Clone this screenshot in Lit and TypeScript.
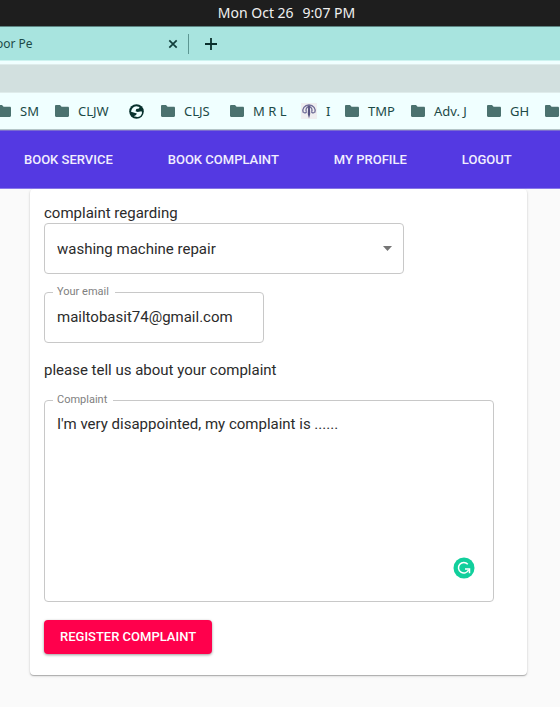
import { LitElement, html, svg, css } from "lit";
import { customElement, state } from "lit/decorators.js";

const folderIcon = html`<svg class="icon" viewBox="0 0 14 12" width="14" height="12" aria-hidden="true">
  <path fill="#4b726f" d="M1.2 0H5l1.6 1.7h6.2c.7 0 1.2.5 1.2 1.2v7.9c0 .7-.5 1.2-1.2 1.2H1.2C.5 12 0 11.500 0 10.800V1.2C0 .5.5 0 1.2 0z"/>
</svg>`;

const globeIcon = html`<svg class="icon" viewBox="0 0 16 16" width="15" height="15" aria-hidden="true">
  <circle cx="8" cy="8" r="7.8" fill="#08312e"/>
  <path fill="#f0ffff" d="M2.200 8.200C2.400 5 4.600 2.600 7.800 2.300l3.400.8-.6 1.700-2.800.6-.8 2.200 2.200.9 4.200-.9.5 1.900c-.5 2.500-2.500 4.300-5 4.400l-3.800-.9 2.400-1.200.9-1.600z"/>
</svg>`;

const emblemIcon = html`<svg class="icon" viewBox="0 0 16 16" width="16" height="16" aria-hidden="true">
  <path fill="#efeef0" d="M0 0h16v16H0z"/>
  <g fill="none" stroke="#6d6a96" stroke-width="1.300">
    <path d="M2.200 9.500C.8 6 3.600 2 8 1.800c4.400.2 7.200 4.200 5.800 7.700"/>
    <path d="M2.400 9.300c1.500 1.200 2.600.6 3.200-.8M13.600 9.300c-1.500 1.200-2.600.6-3.200-.8"/>
    <path d="M5.400 8.500C4.200 6.500 5.600 4 8 3.500c2.400.5 3.800 3 2.600 5"/>
  </g>
  <path fill="#55517f" d="M7.200 2.500h1.600l.4 8.500L8 15.500 6.800 11z"/>
</svg>`;

const grammarIcon = svg`
  <circle cx="11" cy="11" r="10.500" fill="#11cf9c"/>
  <path d="M14.800 7.300A5.300 5.300 0 1 0 15.600 13" fill="none" stroke="#fff" stroke-width="1.500"/>
  <path d="M12 11.900h4.500v4.400" fill="none" stroke="#fff" stroke-width="1.500"/>`;

const bookmarks = [
  { icon: folderIcon, label: "SM" },
  { icon: folderIcon, label: "CLJW" },
  { icon: globeIcon, label: "" },
  { icon: folderIcon, label: "CLJS" },
  { icon: folderIcon, label: "M R L" },
  { icon: emblemIcon, label: "I" },
  { icon: folderIcon, label: "TMP" },
  { icon: folderIcon, label: "Adv. J" },
  { icon: folderIcon, label: "GH" },
  { icon: folderIcon, label: "" },
];

@customElement("browser-chrome")
class BrowserChrome extends LitElement {
  static styles = css`
    :host {
      display: block;
      font-family: "Noto Sans", sans-serif;
      color: #1c4a47;
    }
    .clock {
      display: flex;
      justify-content: center;
      gap: 9px;
      height: 26px;
      padding-left: 13px;
      line-height: 25px;
      font-size: 14px;
      color: #f0f0f0;
      background: #1e1e1e;
      border-bottom: 1px solid #5d8582;
    }
    .tabs {
      display: flex;
      align-items: center;
      height: 33px;
      background: #a8e4df;
      border-bottom: 1px solid #cdf3f0;
      overflow: hidden;
    }
    .tab {
      display: flex;
      align-items: center;
      justify-content: space-between;
      box-sizing: border-box;
      width: 189px;
      height: 20px;
      padding-right: 10px;
      border-right: 1px solid #5c9692;
      font-size: 12px;
    }
    .title {
      margin-left: -4px;
    }
    button {
      display: flex;
      padding: 0;
      border: 0;
      background: none;
    }
    .new {
      margin-left: 16px;
    }
    .address {
      height: 27px;
      margin-top: 3px;
      background: #d2e0df;
      border: 1px solid #dfeceb;
      border-width: 1px 0;
    }
    .page {
      display: flow-root;
      background: #f0ffff;
      overflow: hidden;
    }
    .bookmarks {
      display: grid;
      grid-template-columns: 58px 74px 32px 69px 71px 44px 66px 76px 58px 14px;
      align-items: center;
      height: 36px;
      margin-left: -3px;
      font-size: 13px;
    }
    .bookmark {
      display: flex;
      align-items: center;
      gap: 9px;
      color: inherit;
      text-decoration: none;
      white-space: nowrap;
    }
    .icon {
      flex: none;
    }
    .edge {
      height: 1px;
      background: #b4c6c8;
    }
  `;

  render() {
    return html`
      <div class="clock"><span>Mon Oct 26</span><span>9:07 PM</span></div>
      <div class="tabs">
        <div class="tab">
          <span class="title">oor Pe</span>
          <button aria-label="Close tab">
            <svg viewBox="0 0 10 10" width="10" height="10"><path d="M1.300 1.300l7.400 7.400M8.700 1.300L1.300 8.700" stroke="#123f3c" stroke-width="1.700"/></svg>
          </button>
        </div>
        <button class="new" aria-label="New tab">
          <svg viewBox="0 0 12 12" width="12" height="12"><path d="M6 0v12M0 6h12" stroke="#0a2f2c" stroke-width="1.800"/></svg>
        </button>
      </div>
      <div class="page">
        <div class="address"></div>
        <nav class="bookmarks" aria-label="Bookmarks">
          ${bookmarks.map((b) => html`<a class="bookmark" href="#">${b.icon}${b.label ? html`<span>${b.label}</span>` : ""}</a>`)}
        </nav>
        <div class="edge"></div>
      </div>
    `;
  }
}

@customElement("complaint-form")
class ComplaintForm extends LitElement {
  @state() email = "mailtobasit74@gmail.com";
  @state() complaint = "I'm very disappointed, my complaint is ......";

  static styles = css`
    :host {
      display: block;
    }
    form {
      display: flex;
      flex-direction: column;
      align-items: flex-start;
      padding: 14px 33px 21px 14px;
      background: #fff;
      border-radius: 4px;
      box-shadow: 0 1px 1px rgba(0, 0, 0, 0.24), 0 1px 3px rgba(0, 0, 0, 0.14);
      font-size: 15px;
      line-height: 20px;
      color: #2b2b2b;
    }
    select,
    input,
    textarea {
      display: block;
      box-sizing: border-box;
      width: 100%;
      margin: 0;
      border: 0;
      outline: 0;
      background: none;
      color: inherit;
      font: inherit;
      appearance: none;
      resize: none;
    }
    .pick {
      display: grid;
      align-items: center;
      box-sizing: border-box;
      width: 100%;
      max-width: 360px;
      height: 51px;
      margin-bottom: 12px;
      border: 1px solid #c8c8c8;
      border-radius: 4px;
    }
    .pick > * {
      grid-area: 1 / 1;
    }
    select {
      height: 100%;
      padding: 0 30px 0 12px;
    }
    .arrow {
      justify-self: end;
      margin-right: 11px;
      pointer-events: none;
    }
    fieldset {
      box-sizing: border-box;
      min-width: 0;
      margin: 0;
      padding: 0 8px;
      border: 1px solid #c8c8c8;
      border-radius: 4px;
    }
    legend {
      padding: 0 6px 0 4px;
      font-size: 11px;
      line-height: 12px;
      color: #808080;
    }
    .email {
      width: 220px;
      height: 57px;
      margin-bottom: 17px;
    }
    .email input {
      height: 38px;
      padding: 0 4px;
    }
    .message {
      position: relative;
      width: 100%;
      height: 208px;
      margin-top: 14px;
    }
    textarea {
      height: 190px;
      padding: 8px 4px;
    }
    .grammar {
      position: absolute;
      right: 18px;
      bottom: 17px;
    }
    .submit {
      height: 34px;
      margin-top: 18px;
      padding: 0 16px;
      border: 0;
      border-radius: 4px;
      background: #ff004c;
      color: #fff;
      font: 500 13px/20px Roboto, sans-serif;
      text-transform: uppercase;
      box-shadow: 0 1px 3px rgba(0, 0, 0, 0.4);
    }
  `;

  render() {
    return html`
      <form @submit=${(e: Event) => e.preventDefault()}>
        <label for="topic">complaint regarding</label>
        <div class="pick">
          <select id="topic"><option>washing machine repair</option></select>
          <svg class="arrow" viewBox="0 0 9 5" width="9" height="5" aria-hidden="true"><path d="M0 0h9L4.500 5z" fill="#757575"/></svg>
        </div>
        <fieldset class="email">
          <legend><label for="email">Your email</label></legend>
          <input id="email" type="email" .value=${this.email} @input=${(e: Event) => (this.email = (e.target as HTMLInputElement).value)} />
        </fieldset>
        <span>please tell us about your complaint</span>
        <fieldset class="message">
          <legend><label for="complaint">Complaint</label></legend>
          <textarea id="complaint" spellcheck="false" .value=${this.complaint} @input=${(e: Event) => (this.complaint = (e.target as HTMLTextAreaElement).value)}></textarea>
          <svg class="grammar" viewBox="0 0 22 22" width="22" height="22" aria-hidden="true">${grammarIcon}</svg>
        </fieldset>
        <button class="submit">Register complaint</button>
      </form>
    `;
  }
}

@customElement("app-root")
class AppRoot extends LitElement {
  static styles = css`
    :host {
      display: block;
      min-height: 100vh;
      background: #fafafa;
      font-family: Roboto, sans-serif;
    }
    .menu {
      display: flex;
      align-items: center;
      gap: 55px;
      height: 59px;
      padding: 0 24px;
      background: #5439e2;
      box-shadow: inset 0 1px #7a6bd0, inset 0 -1px #8a78ea;
    }
    .menu a {
      font-size: 13px;
      line-height: 20px;
      font-weight: 500;
      color: #f1eefe;
      text-decoration: none;
      text-transform: uppercase;
      white-space: nowrap;
    }
    main {
      padding: 0 33px 31px 30px;
    }
  `;

  render() {
    return html`
      <browser-chrome></browser-chrome>
      <nav class="menu" aria-label="Main">
        ${["Book service", "Book complaint", "My profile", "Logout"].map((t) => html`<a href="#">${t}</a>`)}
      </nav>
      <main><complaint-form></complaint-form></main>
    `;
  }
}
